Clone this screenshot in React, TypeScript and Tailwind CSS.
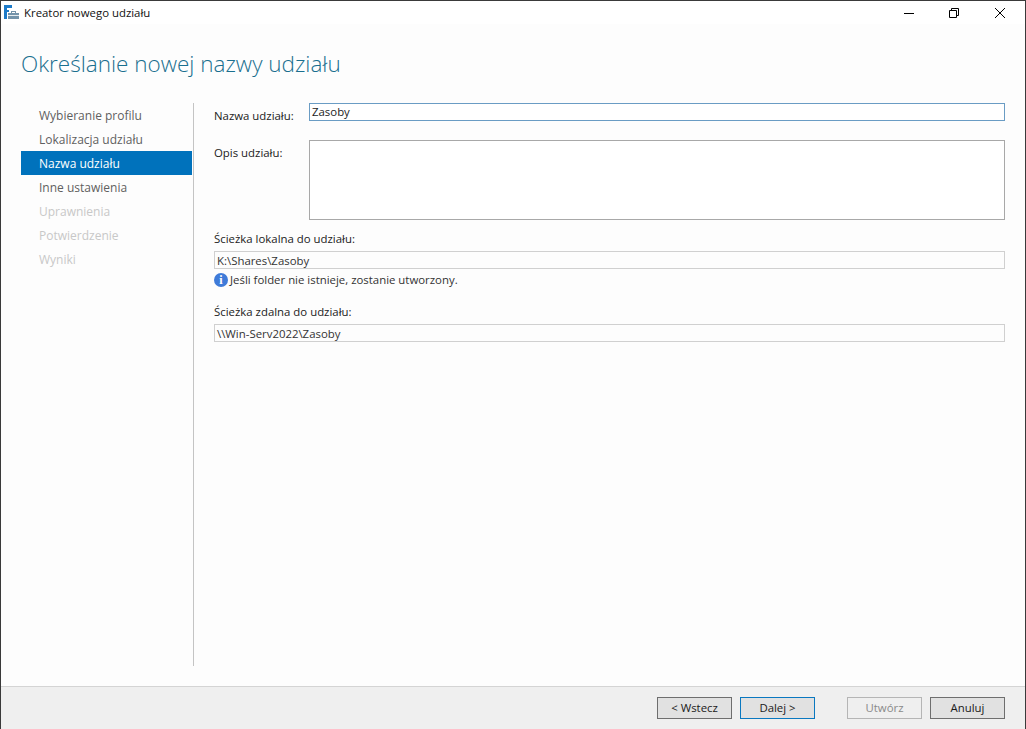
const steps = [
  { label: 'Wybieranie profilu', state: 'done' },
  { label: 'Lokalizacja udziału', state: 'done' },
  { label: 'Nazwa udziału', state: 'active' },
  { label: 'Inne ustawienia', state: 'done' },
  { label: 'Uprawnienia', state: 'off' },
  { label: 'Potwierdzenie', state: 'off' },
  { label: 'Wyniki', state: 'off' },
];

function AppIcon() {
  return (
    <svg width="15" height="15" viewBox="0 0 15 15">
      <rect x="0" y="0" width="3" height="14" fill="#1c7ac8" />
      <rect x="3" y="0" width="5" height="3" fill="#1c7ac8" />
      <rect x="3" y="5" width="2" height="2" fill="#1c7ac8" />
      <rect x="4" y="8" width="11" height="6" fill="#7393aa" />
      <rect x="7.5" y="6.5" width="4" height="2" fill="none" stroke="#7393aa" />
      <rect x="4" y="10" width="11" height="1" fill="#e4ebef" />
    </svg>
  );
}

function WindowButtons() {
  return (
    <div className="ml-auto flex items-center pr-[20px]">
      <svg width="10" height="10" viewBox="0 0 10 10" className="mr-[35px]">
        <path d="M0 5.5H10" stroke="#000" />
      </svg>
      <svg width="10" height="10" viewBox="0 0 10 10" className="mr-[36px]">
        <path d="M0.5 2.5H7.5V9.5H0.5Z M2.5 2.5V0.5H9.5V7.5H7.5" fill="none" stroke="#000" />
      </svg>
      <svg width="10" height="10" viewBox="0 0 10 10">
        <path d="M0 0L10 10M10 0L0 10" stroke="#000" strokeWidth="1" />
      </svg>
    </div>
  );
}

function Button({ label, variant }: { label: string; variant?: 'focus' | 'off' }) {
  let cls = 'border-[#6e6e6e] bg-[#e1e1e1] text-[#1a1a1a]';
  if (variant === 'focus') cls = 'border-[#0a78c0] bg-[#e1e1e1] text-[#1a1a1a]';
  if (variant === 'off') cls = 'border-[#b5b5b5] bg-[#efefef] text-[#8a8a8a]';
  return (
    <div className={`flex h-[22px] w-[75px] items-center justify-center border text-[11.4px] ${cls}`}>
      {label}
    </div>
  );
}

function ReadOnlyBox({ value }: { value: string }) {
  return (
    <div className="flex h-[18px] items-center border border-[#d0d0d0] bg-[#fdfdfd] pl-[2px] text-[#333333]">
      {value}
    </div>
  );
}

export default function App() {
  return (
    <div className="flex h-[729px] w-[1026px] flex-col overflow-hidden border-x border-t border-[#3a3a3a] bg-[#fdfdfd] font-['Open_Sans',sans-serif] text-[11.4px] text-[#333333]">
      <div className="flex h-[23px] shrink-0 items-center bg-white">
        <div className="ml-[3px] flex items-center">
          <AppIcon />
        </div>
        <span className="ml-[5px] text-[#111111]">Kreator nowego udziału</span>
        <WindowButtons />
      </div>

      <div className="flex min-h-0 flex-1 flex-col">
        <h1 className="ml-[20px] mt-[23px] h-[34px] text-[22.5px] leading-[34px] font-light text-[#1a6f8f]">
          Określanie nowej nazwy udziału
        </h1>

        <div className="mt-[22px] flex h-[563px]">
          <nav className="ml-[20px] w-[171px] text-[12px]">
            {steps.map((step) => (
              <div
                key={step.label}
                className={`flex h-[24px] items-center pl-[18px] pt-[1px] ${
                  step.state === 'active'
                    ? 'bg-[#0072bc] text-white'
                    : step.state === 'off'
                      ? 'text-[#c8c8c8]'
                      : 'text-[#5f5f5f]'
                }`}
              >
                {step.label}
              </div>
            ))}
          </nav>

          <div className="ml-[1px] w-px bg-[#c4c4c4]" />

          <div className="ml-[20px] w-[791px]">
            <div className="flex">
              <div className="w-[95px] pt-[4px] text-[#222222]">Nazwa udziału:</div>
              <div className="flex h-[18px] flex-1 items-center border border-[#6a9cc4] bg-white pl-[2px] text-[#222222]">
                Zasoby
              </div>
            </div>

            <div className="mt-[16px] flex">
              <div className="w-[95px] pt-[4px] text-[#222222]">Opis udziału:</div>
              <div className="h-[80px] flex-1 border border-[#a8a8a8] bg-white" />
            </div>

            <div className="mt-[10px] mb-[4px] h-[17px] leading-[17px] text-[#222222]">
              Ścieżka lokalna do udziału:
            </div>
            <ReadOnlyBox value="K:\Shares\Zasoby" />
            <div className="mt-[2px] flex h-[17px] items-center text-[#333333]">
              <span className="flex h-[14px] w-[14px] items-center justify-center rounded-full bg-[#3f7bd9] font-['Liberation_Serif',serif] text-[12px] font-bold text-white">
                i
              </span>
              <span className="ml-[2px]">Jeśli folder nie istnieje, zostanie utworzony.</span>
            </div>

            <div className="mt-[15px] mb-[4px] h-[17px] leading-[17px] text-[#222222]">
              Ścieżka zdalna do udziału:
            </div>
            <ReadOnlyBox value="\\Win-Serv2022\Zasoby" />
          </div>
        </div>
      </div>

      <div className="flex h-[43px] shrink-0 items-start border-t border-[#d4d4d4] bg-[#efefef] pt-[10px] pr-[20px]">
        <div className="ml-auto flex">
          <Button label="< Wstecz" />
          <div className="ml-[8px]">
            <Button label="Dalej >" variant="focus" />
          </div>
          <div className="ml-[32px]">
            <Button label="Utwórz" variant="off" />
          </div>
          <div className="ml-[8px]">
            <Button label="Anuluj" />
          </div>
        </div>
      </div>
    </div>
  );
}
